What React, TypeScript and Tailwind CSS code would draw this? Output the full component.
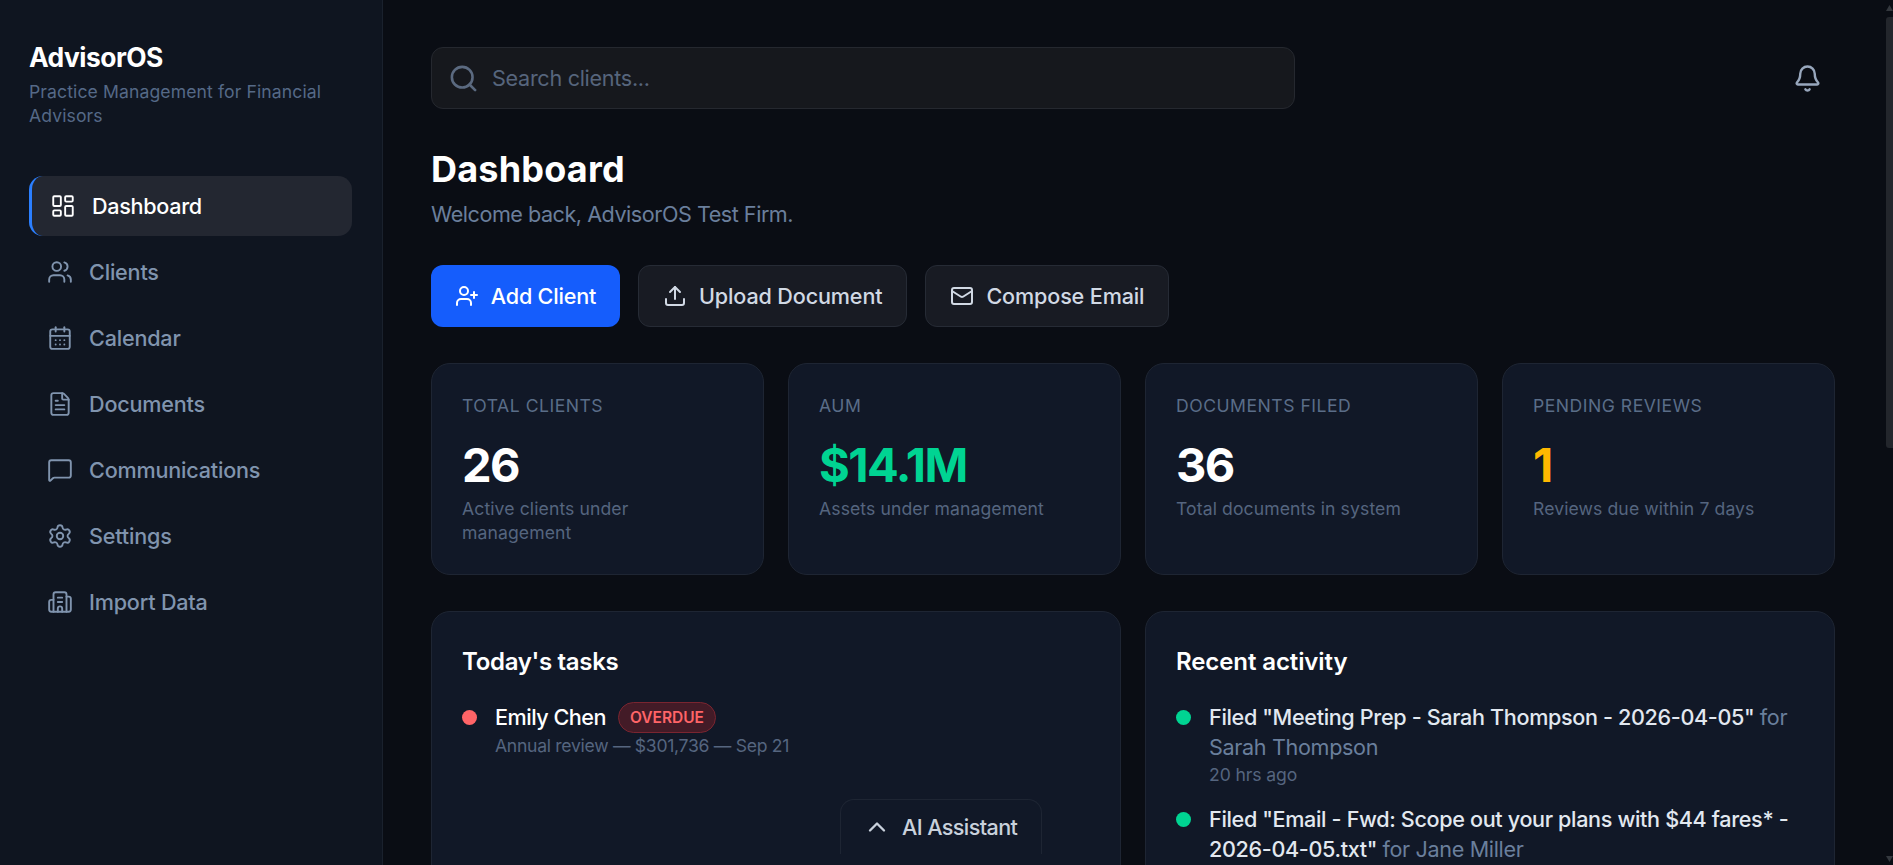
import { Bell, Building2, CalendarDays, ChevronUp, FileText, LayoutDashboard, Mail, MessageSquare, Search, Settings, Upload, UserPlus, Users } from "lucide-react";
import type { ReactNode } from "react";

const navItems = [
  { label: "Dashboard", icon: LayoutDashboard, active: true },
  { label: "Clients", icon: Users },
  { label: "Calendar", icon: CalendarDays },
  { label: "Documents", icon: FileText },
  { label: "Communications", icon: MessageSquare },
  { label: "Settings", icon: Settings },
  { label: "Import Data", icon: Building2 },
];

const stats = [
  { label: "TOTAL CLIENTS", value: "26", color: "text-white", note: "Active clients under management" },
  { label: "AUM", value: "$14.1M", color: "text-[#00d492]", note: "Assets under management" },
  { label: "DOCUMENTS FILED", value: "36", color: "text-white", note: "Total documents in system" },
  { label: "PENDING REVIEWS", value: "1", color: "text-[#ffb900]", note: "Reviews due within 7 days" },
];

function Sidebar() {
  return (
    <aside className="flex h-full w-[383px] shrink-0 flex-col border-r border-[#1a212d] bg-[#0f1520] pl-[29px] pr-[30px] pt-[42px]">
      <div className="text-[26.4px] font-bold leading-[30px] tracking-[-0.5px] text-white">AdvisorOS</div>
      <div className="mt-[8px] text-[17.6px] leading-[24px] tracking-[0.1px] text-[#556987]">
        Practice Management for Financial Advisors
      </div>
      <nav className="mt-[48px] flex flex-col gap-[6px]">
        {navItems.map(({ label, icon: Icon, active }) => (
          <div
            key={label}
            className={
              active
                ? "flex h-[60px] items-center gap-[16px] rounded-[14px] border-l-[3px] border-[#2b7fff] bg-[#232731] pl-[18px] text-[21.6px] font-medium tracking-[-0.3px] text-white"
                : "flex h-[60px] items-center gap-[16px] pl-[18px] text-[21.6px] font-medium tracking-[-0.2px] text-[#8094ae]"
            }
          >
            <Icon size={26} strokeWidth={1.75} />
            <span>{label}</span>
          </div>
        ))}
      </nav>
    </aside>
  );
}

function ActionButton({ icon, label, primary }: { icon: ReactNode; label: string; primary?: boolean }) {
  return (
    <button
      className={
        primary
          ? "flex h-[62px] w-[189px] items-center justify-center gap-[12px] rounded-[12px] bg-[#155dfc] text-[21.6px] font-medium tracking-[-0.2px] text-white"
          : "flex h-[62px] items-center justify-center gap-[12px] rounded-[12px] border border-[#262b35] bg-[#181b23] px-[24px] text-[21.6px] font-medium tracking-[-0.15px] text-[#d1d9e4]"
      }
    >
      {icon}
      {label}
    </button>
  );
}

function StatCard({ label, value, color, note }: (typeof stats)[number]) {
  return (
    <div className="h-[212px] rounded-[19px] border border-[#1e2533] bg-[#111827] px-[30px] pt-[30px]">
      <div className="text-[17.6px] leading-[24px] tracking-[0.5px] text-[#5a6d88]">{label}</div>
      <div className={`mt-[20px] text-[47px] font-bold leading-[54px] tracking-[-1.5px] ${color}`}>{value}</div>
      <div className="mt-[5px] text-[17.6px] leading-[24px] tracking-[0.1px] text-[#55657f]">{note}</div>
    </div>
  );
}

function ScrollArrow({ up }: { up?: boolean }) {
  return (
    <svg width="7" height="6" viewBox="0 0 7 6" className="ml-[3px]">
      <polygon points={up ? "3.5,0 7,6 0,6" : "0,0 7,0 3.5,6"} fill="#34383e" />
    </svg>
  );
}

export default function App() {
  return (
    <div
      className="relative flex h-[865px] overflow-hidden bg-[#0a0d14]"
      style={{ fontFamily: "Inter, 'Noto Sans', sans-serif" }}
    >
      <Sidebar />
      <main className="min-w-0 flex-1 px-[48px] pt-[47px]">
        <div className="flex items-center justify-between">
          <div className="flex h-[62px] w-[864px] items-center gap-[13px] rounded-[12px] border border-[#25282f] bg-[#16181d] pl-[16px]">
            <Search size={31} strokeWidth={2} className="text-[#5b6a80]" />
            <span className="text-[21.6px] tracking-[-0.3px] text-[#56657c]">Search clients...</span>
          </div>
          <Bell size={29} strokeWidth={2} className="mr-[13px] text-[#98a7bd]" />
        </div>

        <h1 className="mt-[37px] text-[36px] font-bold leading-[46px] tracking-[0.2px] text-white">Dashboard</h1>
        <p className="mt-[7px] text-[21.6px] leading-[30px] tracking-[-0.48px] text-[#6a7f9c]">
          Welcome back, AdvisorOS Test Firm.
        </p>

        <div className="mt-[36px] flex gap-[18px]">
          <ActionButton primary icon={<UserPlus size={24} strokeWidth={2} />} label="Add Client" />
          <ActionButton icon={<Upload size={24} strokeWidth={2} />} label="Upload Document" />
          <ActionButton icon={<Mail size={24} strokeWidth={2} />} label="Compose Email" />
        </div>

        <div className="mt-[36px] grid grid-cols-4 gap-[24px]">
          {stats.map((s) => (
            <StatCard key={s.label} {...s} />
          ))}
        </div>

        <div className="mt-[36px] grid grid-cols-2 gap-[24px]">
          <section className="h-[400px] rounded-[19px] border border-[#1e2533] bg-[#111827] px-[30px] pt-[35px]">
            <h2 className="text-[24px] font-semibold leading-[30px] tracking-[-0.3px] text-white">Today's tasks</h2>
            <div className="mt-[25px] flex gap-[18px]">
              <span className="mt-[8px] h-[15px] w-[15px] shrink-0 rounded-full bg-[#ff6467]" />
              <div>
                <div className="flex items-center gap-[12px]">
                  <span className="text-[21.6px] font-medium leading-[31px] tracking-[-0.5px] text-white">Emily Chen</span>
                  <span className="flex h-[31px] items-center rounded-full border border-[#7a2530] bg-[#431b27] px-[11px] text-[15.5px] font-semibold text-[#ff6467]">
                    OVERDUE
                  </span>
                </div>
                <div className="text-[17.6px] leading-[26px] tracking-[-0.3px] text-[#55657f]">
                  Annual review — $301,736 — Sep 21
                </div>
              </div>
            </div>
          </section>

          <section className="h-[400px] rounded-[19px] border border-[#1e2533] bg-[#111827] px-[30px] pt-[35px]">
            <h2 className="text-[24px] font-semibold leading-[30px] tracking-[-0.1px] text-white">Recent activity</h2>
            <div className="mt-[25px] flex gap-[18px]">
              <span className="mt-[8px] h-[15px] w-[15px] shrink-0 rounded-full bg-[#00d492]" />
              <div>
                <div className="text-[21.6px] font-medium leading-[30px] tracking-[-0.35px] text-[#e2e8f0]">
                  Filed "Meeting Prep - Sarah Thompson - 2026-04-05" <span className="font-normal text-[#6a7f9c]">for Sarah Thompson</span>
                </div>
                <div className="text-[17.6px] leading-[26px] tracking-[-0.1px] text-[#55657f]">20 hrs ago</div>
              </div>
            </div>
            <div className="mt-[16px] flex gap-[18px]">
              <span className="mt-[8px] h-[15px] w-[15px] shrink-0 rounded-full bg-[#00d492]" />
              <div className="text-[21.6px] font-medium leading-[30px] tracking-[-0.35px] text-[#e2e8f0]">
                Filed "Email - Fwd: Scope out your plans with $44 fares* - 2026-04-05.txt" <span className="font-normal text-[#6a7f9c]">for Jane Miller</span>
              </div>
            </div>
          </section>
        </div>
      </main>

      {/* page scrollbar */}
      <div className="flex w-[10px] shrink-0 flex-col justify-between pb-[3px] pt-[5px]">
        <div>
          <ScrollArrow up />
          <div className="ml-[3px] mt-[6px] h-[431px] w-[7px] rounded-l-[3px] bg-[#23262c]" />
        </div>
        <ScrollArrow />
      </div>

      {/* collapsed assistant tab */}
      <div className="absolute left-[840px] top-[799px] flex h-[55px] w-[202px] items-center gap-[11px] rounded-t-[14px] border border-b-0 border-[#1e2533] bg-[#111827] pl-[22px] text-[21.6px] font-medium tracking-[-0.6px] text-[#c9d1dc]">
        <ChevronUp size={28} strokeWidth={2} />
        AI Assistant
      </div>
    </div>
  );
}
